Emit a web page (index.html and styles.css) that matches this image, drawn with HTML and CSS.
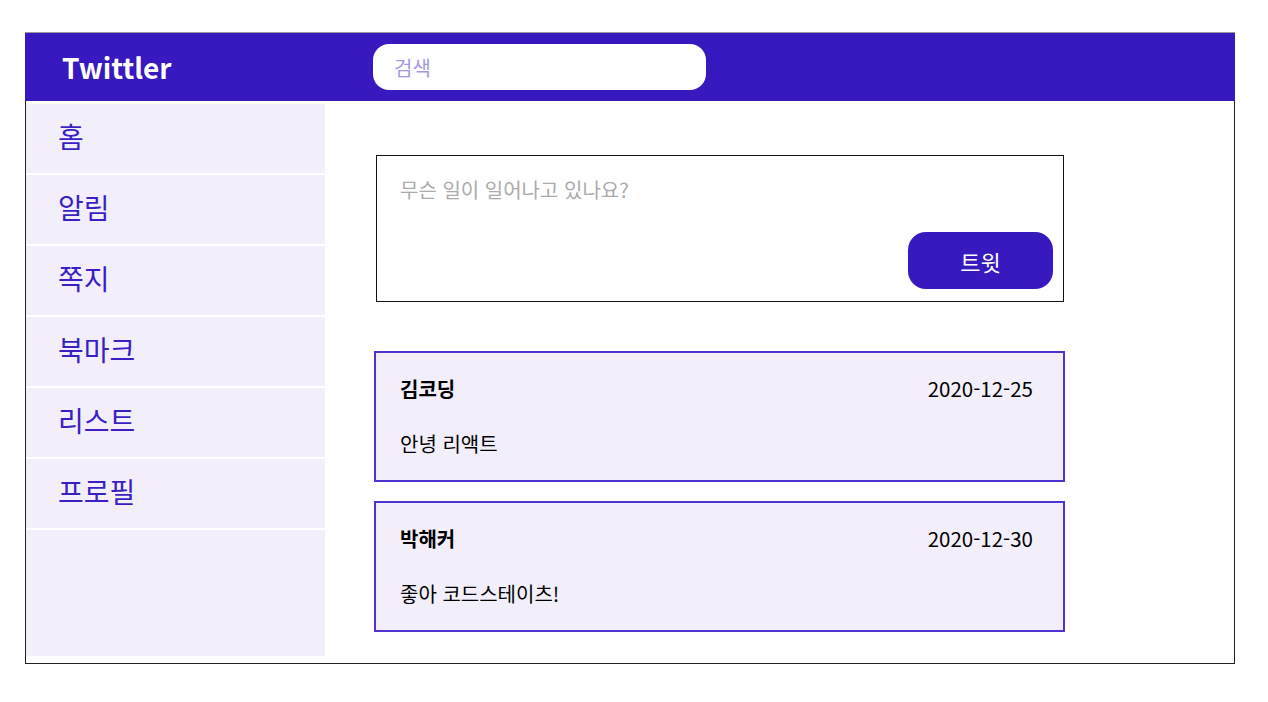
FILE: index.html
```html
<!DOCTYPE html>
<html lang="ko">
<head>
    <meta charset="UTF-8">
    <meta name="viewport" content="width=device-width, initial-scale=1.0">
    <title>Twittler</title>
    <link rel="stylesheet" href="styles.css">
</head>
<body>
    <div class="app">
        <div class="header">
            <div class="logo">Twittler</div>
            <input class="search" type="text" placeholder="검색">
        </div>

        <div class="main">
            <div class="sidebar">
                <div class="menu-item">홈</div>
                <div class="menu-item">알림</div>
                <div class="menu-item">쪽지</div>
                <div class="menu-item">북마크</div>
                <div class="menu-item">리스트</div>
                <div class="menu-item">프로필</div>
                <div class="menu-fill"></div>
            </div>

            <div class="content">
                <div class="write-box">
                    <textarea class="write-input" placeholder="무슨 일이 일어나고 있나요?"></textarea>
                    <button class="btn-tweet">트윗</button>
                </div>

                <div class="tweet">
                    <div class="tweet-head">
                        <span class="tweet-user">김코딩</span>
                        <span class="tweet-date">2020-12-25</span>
                    </div>
                    <div class="tweet-text">안녕 리액트</div>
                </div>

                <div class="tweet">
                    <div class="tweet-head">
                        <span class="tweet-user">박해커</span>
                        <span class="tweet-date">2020-12-30</span>
                    </div>
                    <div class="tweet-text">좋아 코드스테이츠!</div>
                </div>
            </div>
        </div>
    </div>
</body>
</html>
```

FILE: styles.css
```css
* { box-sizing: border-box; }
body { margin: 0; background: white; font-family: "Noto Sans CJK KR", "Noto Sans", sans-serif; }
.app { width: 1210px; margin: 32px 0 0 25px; }
.header { display: flex; align-items: center; height: 69px; padding-left: 37px; background: #3819bf; border-top: 1px solid #9a9a9a; }
.logo { width: 311px; flex: none; color: white; font-size: 28px; font-weight: 700; }
.search { width: 333px; height: 46px; border: none; border-radius: 16px; padding: 0 21px; font-family: inherit; font-size: 20px; outline: none; }
.search::placeholder { color: #a797e2; }
.main { display: flex; height: 563px; padding-bottom: 7px; border: 1px solid #222; border-top: none; }
.sidebar { width: 299px; flex: none; display: flex; flex-direction: column; padding-top: 1px; }
.menu-item { height: 69px; margin-top: 2px; padding: 0 0 5px 32px; display: flex; align-items: center; background: #f2effa; color: #3b1fc4; font-size: 28px; }
.menu-fill { flex: 1; margin-top: 2px; background: #f2effa; }
.content { padding: 54px 0 0 49px; }
.write-box { width: 688px; height: 147px; margin-left: 2px; border: 1px solid #111; display: flex; flex-direction: column; padding: 20px 10px 12px 23px; }
.write-input { height: 40px; border: none; resize: none; outline: none; padding: 0; font-family: inherit; font-size: 20px; line-height: 28px; }
.write-input::placeholder { color: #ababab; }
.btn-tweet { margin-top: auto; align-self: flex-end; width: 145px; height: 57px; border: none; border-radius: 18px; background: #3819bf; color: white; font-family: inherit; font-size: 22px; }
.tweet { width: 691px; height: 131px; margin-top: 49px; padding: 21px 30px 0 24px; background: #f2effa; border: 2px solid #5033d2; }
.tweet + .tweet { margin-top: 19px; }
.tweet-head { display: flex; justify-content: space-between; align-items: center; height: 28px; font-size: 20px; }
.tweet-user { font-weight: 700; }
.tweet-date { font-size: 20.5px; }
.tweet-text { margin-top: 28px; font-size: 20px; line-height: 28px; }
```
